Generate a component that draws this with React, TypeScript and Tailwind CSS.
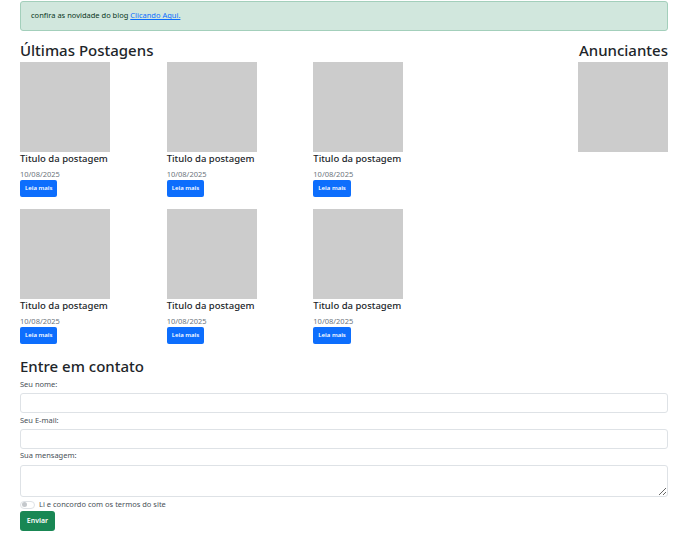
const POSTS = Array.from({ length: 6 }, () => ({
  title: "Titulo da postagem",
  date: "10/08/2025",
}));

export default function App() {
  return (
    <div
      className="min-h-[544px] bg-white pt-px pr-[21px] pl-5 text-[#212529]"
      style={{ fontFamily: '"Noto Sans", "Open Sans", sans-serif' }}
    >
      {/* aviso */}
      <div className="flex h-[30px] items-center rounded-[3px] border border-[#a3cfbb] bg-[#d1e7dd] px-[10px] text-[7.5px] text-[#0a3622]">
        confira as novidade do blog&nbsp;
        <a href="#" className="text-[#0d6efd] underline">
          Clicando Aqui.
        </a>
      </div>

      {/* postagens + anunciantes */}
      <div className="flex justify-between">
        <div className="w-[440px]">
          <h2 className="mt-[8px] h-[23px] text-[15px] leading-[23px] font-medium">Últimas Postagens</h2>
          <div className="grid grid-cols-3">
            {POSTS.map((p, i) => (
              <div key={i} className="h-[147px]">
                <div className="h-[90px] w-[90px] bg-[#cccccc]" />
                <p className="mt-px text-[9.5px] leading-[12px] font-medium">{p.title}</p>
                <p className="mt-[4px] text-[7.5px] leading-[10px] text-[#6c757d]">{p.date}</p>
                <button className="mt-px block h-[17px] rounded-[2px] bg-[#0d6efd] px-[5px] text-[6px] font-semibold text-white">
                  Leia mais
                </button>
              </div>
            ))}
          </div>
        </div>
        <div className="flex flex-col items-end">
          <h2 className="mt-[8px] h-[23px] text-[15px] leading-[23px] font-medium">Anunciantes</h2>
          <div className="h-[90px] w-[90px] bg-[#cccccc]" />
        </div>
      </div>

      {/* contato */}
      <h2 className="-mt-[1px] h-[22px] text-[15px] leading-[22px] font-medium">Entre em contato</h2>
      <form className="flex flex-col">
        <label className="h-[16px] pt-px text-[7.5px] leading-[12px] text-[#495057]">Seu nome:</label>
        <input className="h-[20px] rounded-[3px] border border-[#dee2e6]" />
        <label className="h-[16px] pt-px text-[7.5px] leading-[12px] text-[#495057]">Seu E-mail:</label>
        <input className="h-[20px] rounded-[3px] border border-[#dee2e6]" />
        <label className="h-[16px] text-[7.5px] leading-[12px] text-[#495057]">Sua mensagem:</label>
        <textarea className="h-[32px] rounded-[3px] border border-[#dee2e6]" />
        <div className="mt-[2px] flex h-[11px] items-center gap-[4px]">
          <span className="flex h-[8px] w-[15px] items-center rounded-full border border-[#dee2e6] px-px">
            <span className="h-[5px] w-[5px] rounded-full bg-[#c4c8cc]" />
          </span>
          <span className="text-[7.5px] text-[#495057]">Li e concordo com os termos do site</span>
        </div>
        <button
          type="button"
          className="mt-px h-[20px] w-[35px] rounded-[3px] bg-[#198754] text-[7px] font-semibold text-white"
        >
          Enviar
        </button>
      </form>
    </div>
  );
}
